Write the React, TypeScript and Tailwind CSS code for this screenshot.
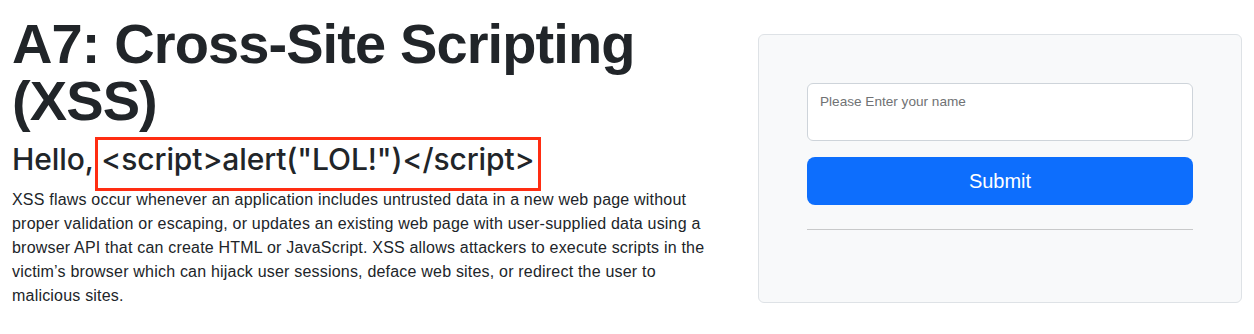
import React from 'react';

const App = () => {
  return (
    <div className="flex w-[1254px] h-[334px] bg-white text-[#212529] font-['Liberation_Sans',Arial,sans-serif] overflow-hidden">
      {/* Left column */}
      <div className="w-[731px] px-3 pt-[15px]">
        <h1 className="text-[56px] leading-[57px] font-bold tracking-[-0.9px]">
          A7: Cross-Site Scripting (XSS)
        </h1>
        <h3 className="mt-[12px] font-['Inter',sans-serif] font-medium text-[30px] leading-[36px] tracking-[-0.1px]">
          Hello,{' '}
          <span className="relative">
            {'<script>alert("LOL!")</script>'}
            <span className="absolute -left-[6px] -right-[6px] -top-[4px] -bottom-[14px] border-[3px] border-[#ff2d12]"></span>
          </span>
        </h3>
        <p className="mt-[11px] text-base leading-6 tracking-[0.2px]">
          XSS flaws occur whenever an application includes untrusted data in a new web page without proper validation
          or escaping, or updates an existing web page with user-supplied data using a browser API that can create HTML
          or JavaScript. XSS allows attackers to execute scripts in the victim’s browser which can hijack user sessions,
          deface web sites, or redirect the user to malicious sites.
        </p>
      </div>

      {/* Right column */}
      <div className="flex-1 pl-[27px] pr-3 pt-[34px]">
        <div className="rounded-md border border-[#dee2e6] bg-[#f8f9fa] p-12">
          <div className="relative">
            <input
              type="text"
              className="block w-full h-[58px] rounded-md border border-[#ced4da] bg-white px-3 pt-[26px] pb-[6px] text-base outline-none"
            />
            <label className="absolute left-[13px] top-[9px] text-[13.6px] leading-5 text-[#707274] pointer-events-none">
              Please Enter your name
            </label>
          </div>
          <button className="mt-4 block w-full h-12 rounded-lg bg-[#0d6efd] text-white text-xl leading-[30px]">
            Submit
          </button>
          <hr className="my-6 border-0 border-t border-[#c8c9ca]" />
        </div>
      </div>
    </div>
  );
};

export default App;
